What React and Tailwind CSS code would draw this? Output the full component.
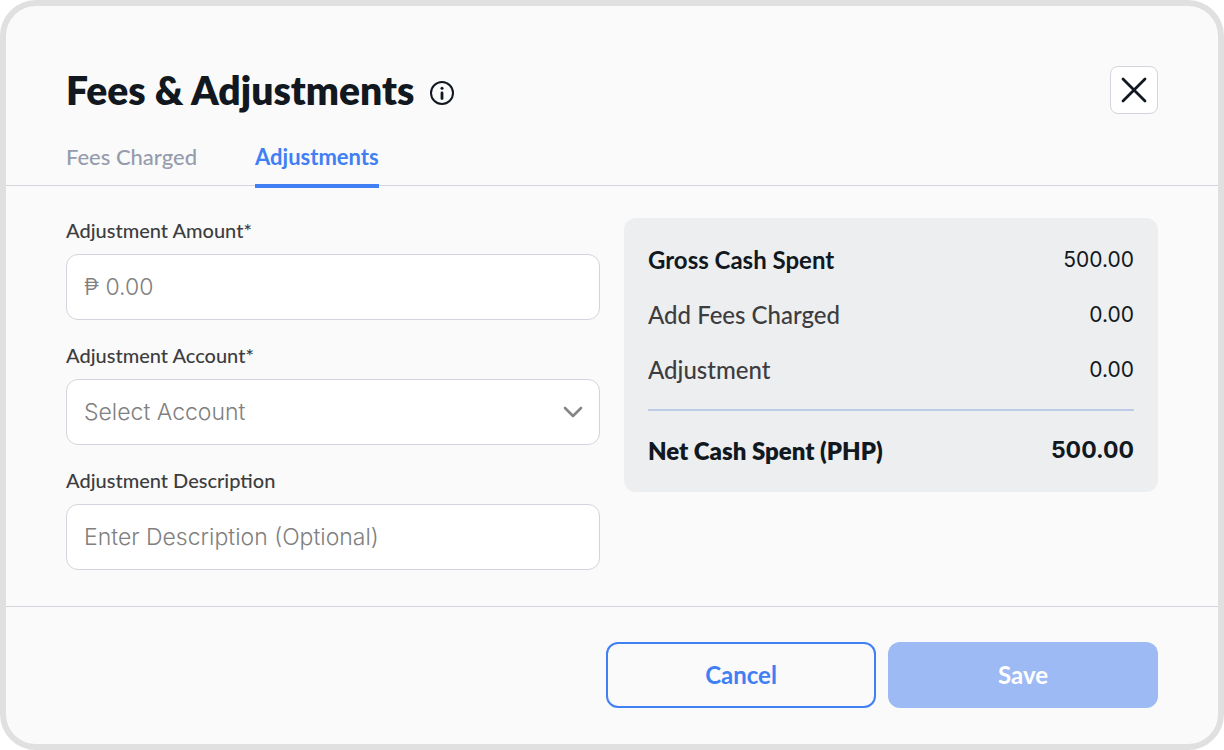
import React, { useState } from 'react';

const InfoIcon = () => (
    <svg width="24" height="24" viewBox="0 0 24 24" fill="none" aria-hidden="true">
        <circle cx="12" cy="12" r="11" stroke="currentColor" strokeWidth="2" />
        <circle cx="12" cy="7.3" r="1.5" fill="currentColor" />
        <path d="M12 12v5.5" stroke="currentColor" strokeWidth="2.8" strokeLinecap="round" />
    </svg>
);

const CloseIcon = () => (
    <svg width="26" height="26" viewBox="0 0 26 26" fill="none" aria-hidden="true">
        <path d="M2 2l22 22M24 2L2 24" stroke="currentColor" strokeWidth="2.8" strokeLinecap="round" />
    </svg>
);

const ChevronIcon = () => (
    <svg
        className="pointer-events-none absolute right-[17px] top-1/2 -translate-y-1/2 text-[#858585]"
        width="20" height="12" viewBox="0 0 20 12" fill="none" aria-hidden="true"
    >
        <path d="M2 2l8 8 8-8" stroke="currentColor" strokeWidth="2.6" strokeLinecap="round" strokeLinejoin="round" />
    </svg>
);

const tabs = ['Fees Charged', 'Adjustments'];

const summary = [
    { label: 'Gross Cash Spent', value: '500.00', style: 'font-bold text-[#111820]' },
    { label: 'Add Fees Charged', value: '0.00', style: 'font-medium text-[#3d3d3f]' },
    { label: 'Adjustment', value: '0.00', style: 'font-medium text-[#3d3d3f]' },
];

const fieldClass = "h-[66px] w-full rounded-xl border border-[#d4d4dc] bg-white px-[17px] font-['Inter',sans-serif] text-[23px] font-light text-[#808080] outline-none placeholder:text-[#808080] placeholder:opacity-100";

const Field = ({ id, label, children }) => (
    <div>
        <label htmlFor={id} className="mb-3 block text-[20px] leading-6 font-medium text-[#3d3d3f]">{label}</label>
        {children}
    </div>
);

const App = () => {
    const [active, setActive] = useState('Adjustments');

    return (
        <div className="flex min-h-screen flex-col rounded-[36px] border-6 border-[#e0e0e0] bg-[#fafafa] font-['Lato',sans-serif] text-[#111820]">
            <header className="border-b border-[#d4d4dc] px-[60px] pt-[60px]">
                <div className="flex items-center justify-between">
                    <div className="flex items-center gap-4">
                        <h1 className="text-[39px] leading-[48px] font-extrabold">Fees &amp; Adjustments</h1>
                        <button type="button" aria-label="More information" className="mt-1.5"><InfoIcon /></button>
                    </div>
                    <button type="button" aria-label="Close" className="flex size-12 items-center justify-center rounded-lg border border-[#d4d4dc] bg-white">
                        <CloseIcon />
                    </button>
                </div>
                <div role="tablist" className="-mb-[3px] mt-7 flex gap-[58px] text-[22px] leading-[30px]">
                    {tabs.map((tab) => (
                        <button
                            key={tab}
                            type="button"
                            role="tab"
                            aria-selected={active === tab}
                            onClick={() => setActive(tab)}
                            className={`border-b-4 pb-3 ${active === tab ? 'border-[#407ff4] font-bold text-[#407ff4]' : 'border-transparent font-medium text-[#949cad]'}`}
                        >
                            {tab}
                        </button>
                    ))}
                </div>
            </header>

            <main className="grid grow grid-cols-2 items-start gap-6 px-[60px] pt-8 pb-8">
                <form className="flex flex-col gap-[23px]">
                    <Field id="amount" label="Adjustment Amount*">
                        <input id="amount" type="text" placeholder="₱ 0.00" className={fieldClass} />
                    </Field>
                    <Field id="account" label="Adjustment Account*">
                        <div className="relative">
                            <select id="account" className={`${fieldClass} appearance-none`}>
                                <option>Select Account</option>
                            </select>
                            <ChevronIcon />
                        </div>
                    </Field>
                    <Field id="description" label="Adjustment Description">
                        <input id="description" type="text" placeholder="Enter Description (Optional)" className={fieldClass} />
                    </Field>
                </form>

                <section className="rounded-xl bg-[#edeef0] p-6 text-[24px] leading-[35px]">
                    <dl className="flex flex-col gap-5">
                        {summary.map((row) => (
                            <div key={row.label} className="flex justify-between">
                                <dt className={row.style}>{row.label}</dt>
                                <dd className="font-['Inter',sans-serif] text-[21px]">{row.value}</dd>
                            </div>
                        ))}
                    </dl>
                    <dl className="mt-[22px] flex justify-between border-t-2 border-[#bccbe8] pt-[22px]">
                        <dt className="font-extrabold">Net Cash Spent (PHP)</dt>
                        <dd className="font-['Inter',sans-serif] text-[23px] font-bold">500.00</dd>
                    </dl>
                </section>
            </main>

            <footer className="flex justify-end gap-3 border-t border-[#d4d4dc] px-[60px] pt-[35px] pb-9 text-[24px] font-bold">
                <button type="button" className="h-[66px] w-[270px] rounded-xl border-2 border-[#407ff4] text-[#407ff4]">Cancel</button>
                <button type="button" className="h-[66px] w-[270px] rounded-xl bg-[#9dbaf5] text-white">Save</button>
            </footer>
        </div>
    );
};

export default App;
